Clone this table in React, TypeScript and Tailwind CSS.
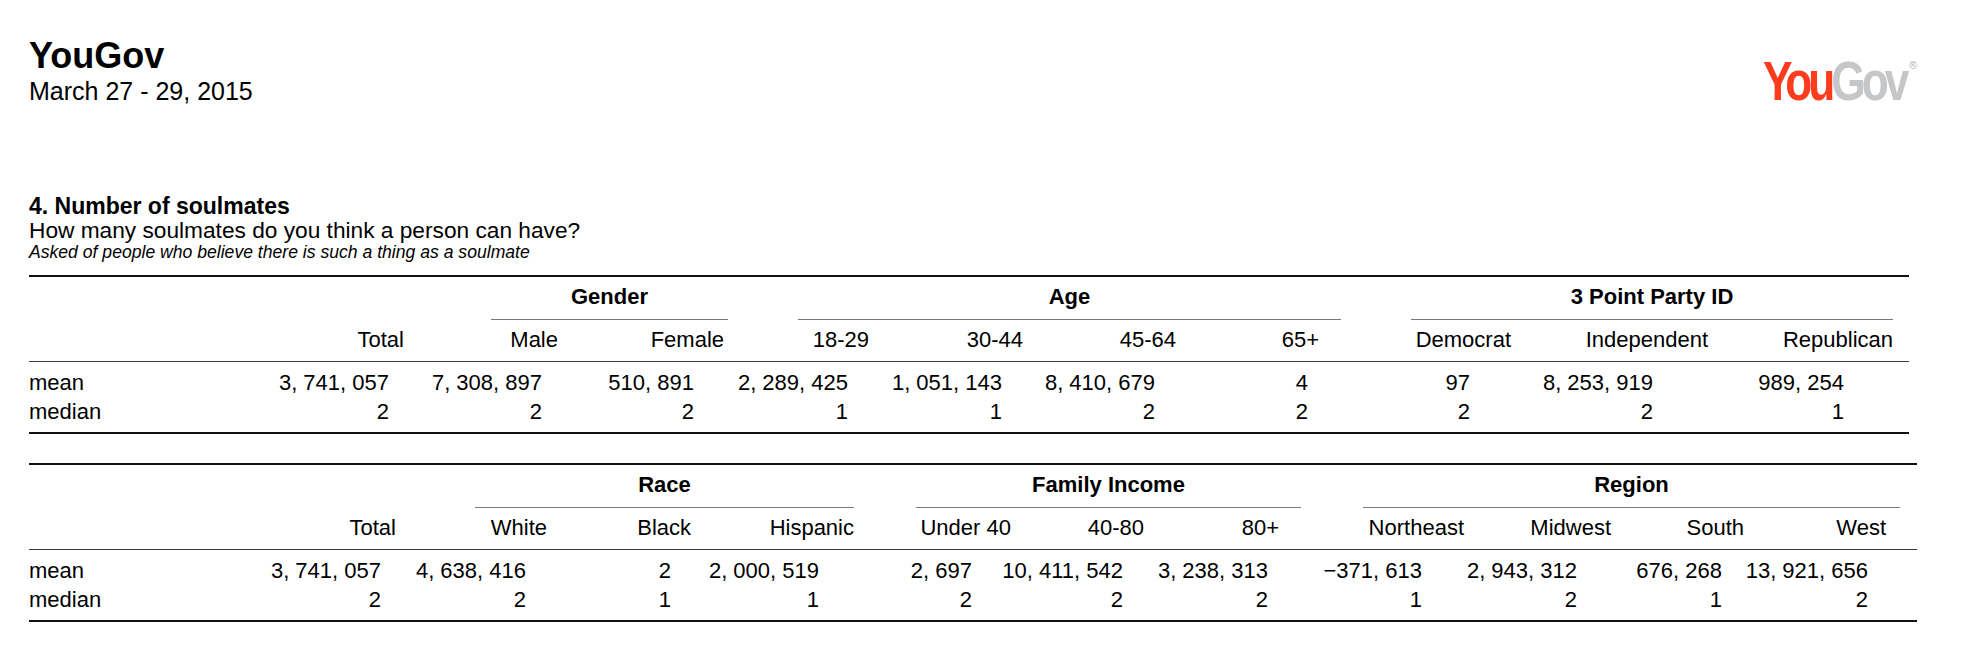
type Cell = { label: string; start: string; head: string; val: string; mean: string; median: string };
type Group = { name: string; span: string };

const table1: { grid: string; width: string; groups: Group[]; cols: Cell[] } = {
  grid: "grid-cols-[221px_241px_89px_148px_70px_82px_154px_153px_154px_70px_129px_180px_173px_16px]",
  width: "w-[1880px]",
  groups: [
    { name: "Gender", span: "col-start-3 col-span-2" },
    { name: "Age", span: "col-start-6 col-span-4" },
    { name: "3 Point Party ID", span: "col-start-11 col-span-3" },
  ],
  cols: [
    { label: "Total", start: "col-start-2", head: "pr-[87px]", val: "pr-[102px]", mean: "3, 741, 057", median: "2" },
    { label: "Male", start: "col-start-3", head: "pr-[22px]", val: "pr-[38px]", mean: "7, 308, 897", median: "2" },
    { label: "Female", start: "col-start-4", head: "pr-[4px]", val: "pr-[34px]", mean: "510, 891", median: "2" },
    { label: "18-29", start: "col-start-6", head: "pr-[11px]", val: "pr-[32px]", mean: "2, 289, 425", median: "1" },
    { label: "30-44", start: "col-start-7", head: "pr-[11px]", val: "pr-[32px]", mean: "1, 051, 143", median: "1" },
    { label: "45-64", start: "col-start-8", head: "pr-[11px]", val: "pr-[32px]", mean: "8, 410, 679", median: "2" },
    { label: "65+", start: "col-start-9", head: "pr-[22px]", val: "pr-[33px]", mean: "4", median: "2" },
    { label: "Democrat", start: "col-start-11", head: "pr-[29px]", val: "pr-[70px]", mean: "97", median: "2" },
    { label: "Independent", start: "col-start-12", head: "pr-[12px]", val: "pr-[67px]", mean: "8, 253, 919", median: "2" },
    { label: "Republican", start: "col-start-13", head: "pr-[0px]", val: "pr-[49px]", mean: "989, 254", median: "1" },
  ],
};

const table2: { grid: string; width: string; groups: Group[]; cols: Cell[] } = {
  grid: "grid-cols-[221px_225px_85px_140px_154px_62px_104px_135px_146px_62px_117px_150px_130px_140px_17px]",
  width: "w-[1888px]",
  groups: [
    { name: "Race", span: "col-start-3 col-span-3" },
    { name: "Family Income", span: "col-start-7 col-span-3" },
    { name: "Region", span: "col-start-11 col-span-4" },
  ],
  cols: [
    { label: "Total", start: "col-start-2", head: "pr-[79px]", val: "pr-[94px]", mean: "3, 741, 057", median: "2" },
    { label: "White", start: "col-start-3", head: "pr-[13px]", val: "pr-[34px]", mean: "4, 638, 416", median: "2" },
    { label: "Black", start: "col-start-4", head: "pr-[9px]", val: "pr-[29px]", mean: "2", median: "1" },
    { label: "Hispanic", start: "col-start-5", head: "pr-[0px]", val: "pr-[35px]", mean: "2, 000, 519", median: "1" },
    { label: "Under 40", start: "col-start-7", head: "pr-[9px]", val: "pr-[48px]", mean: "2, 697", median: "2" },
    { label: "40-80", start: "col-start-8", head: "pr-[11px]", val: "pr-[32px]", mean: "10, 411, 542", median: "2" },
    { label: "80+", start: "col-start-9", head: "pr-[22px]", val: "pr-[33px]", mean: "3, 238, 313", median: "2" },
    { label: "Northeast", start: "col-start-11", head: "pr-[16px]", val: "pr-[58px]", mean: "\u2212371, 613", median: "1" },
    { label: "Midwest", start: "col-start-12", head: "pr-[19px]", val: "pr-[53px]", mean: "2, 943, 312", median: "2" },
    { label: "South", start: "col-start-13", head: "pr-[16px]", val: "pr-[38px]", mean: "676, 268", median: "1" },
    { label: "West", start: "col-start-14", head: "pr-[14px]", val: "pr-[32px]", mean: "13, 921, 656", median: "2" },
  ],
};

function CrossTab({ table, className }: { table: typeof table1; className?: string }) {
  const rows: { name: string; key: "mean" | "median" }[] = [
    { name: "mean", key: "mean" },
    { name: "median", key: "median" },
  ];

  return (
    <div className={[table.width, className ?? ""].join(" ")}>
      <div className="h-[2px] bg-[#111]" />

      {/* group titles with their rules */}
      <div className={["grid pt-[6px]", table.grid].join(" ")}>
        {table.groups.map((g) => (
          <div
            key={g.name}
            className={[
              "row-start-1 border-b border-[#7a7a7a] pb-[8px] text-center font-bold leading-[28px]",
              g.span,
            ].join(" ")}
          >
            {g.name}
          </div>
        ))}
      </div>

      {/* column headings */}
      <div className={["grid pt-[6px] pb-[7px]", table.grid].join(" ")}>
        {table.cols.map((c) => (
          <div key={c.label} className={["row-start-1 flex justify-end whitespace-nowrap leading-[28px]", c.start, c.head].join(" ")}>
            {c.label}
          </div>
        ))}
      </div>

      <div className="h-px bg-[#3a3a3a]" />

      <div className="py-[6px]">
        {rows.map((r) => (
          <div key={r.name} className={["grid leading-[29px]", table.grid].join(" ")}>
            <div className="col-start-1 row-start-1">{r.name}</div>
            {table.cols.map((c) => (
              <div key={c.label} className={["row-start-1 flex justify-end whitespace-nowrap", c.start, c.val].join(" ")}>
                {c[r.key]}
              </div>
            ))}
          </div>
        ))}
      </div>

      <div className="h-[2px] bg-[#111]" />
    </div>
  );
}

function Logo() {
  return (
    <div className="mt-[17px] flex items-start">
      <span className="inline-block origin-right scale-x-[0.79] text-[56px] font-bold leading-[56px] tracking-[-5px]">
        <span className="text-[#ff3b1d]">You</span>
        <span className="text-[#c5c6c8]">Gov</span>
      </span>
      <span className="ml-[3px] mt-[7px] text-[11px] leading-none text-[#b5b5b7]">®</span>
    </div>
  );
}

export default function App() {
  return (
    <div className="min-h-[658px] w-[1976px] bg-white pl-[29px] pt-[36px] font-['Liberation_Sans',Arial,sans-serif] text-[22px] text-black">
      <header className="flex items-start justify-between pr-[59px]">
        <div>
          <h1 className="text-[36px] font-bold leading-[40px]">YouGov</h1>
          <p className="text-[25px] leading-[30px]">March 27 - 29, 2015</p>
        </div>
        <Logo />
      </header>

      <section className="mt-[85px]">
        <h2 className="text-[23px] font-bold leading-[24px]">4. Number of soulmates</h2>
        <p className="text-[22.7px] leading-[24px]">How many soulmates do you think a person can have?</p>
        <p className="text-[17.6px] italic leading-[20px]">Asked of people who believe there is such a thing as a soulmate</p>
      </section>

      <CrossTab table={table1} className="mt-[13px]" />
      <CrossTab table={table2} className="mt-[29px]" />
    </div>
  );
}
